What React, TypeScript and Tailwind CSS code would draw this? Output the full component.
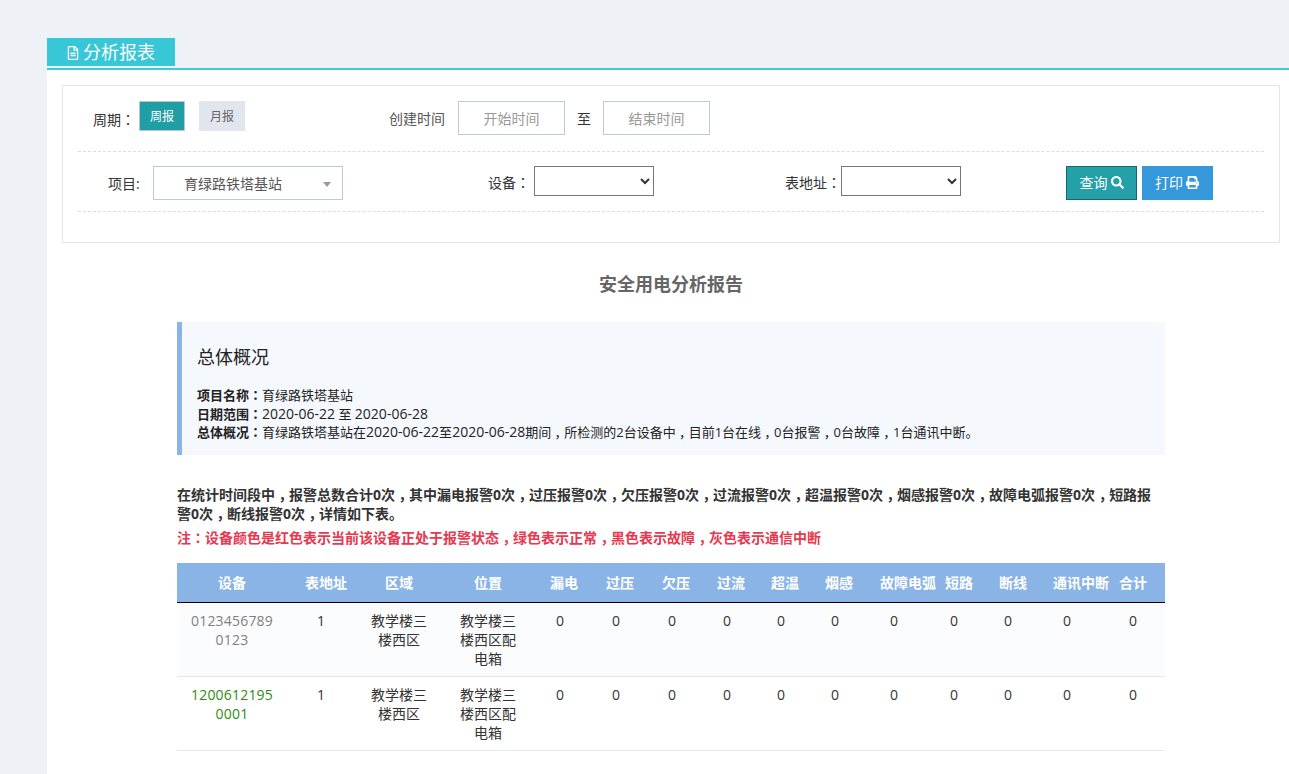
import { FaPrint, FaRegFileAlt, FaSearch } from "react-icons/fa";

const FONT = "font-['Open_Sans','Noto_Sans_CJK_SC',sans-serif]";

const COLUMNS = [
  { name: "设备", width: "w-[110px]", head: "text-center" },
  { name: "表地址", width: "w-[68px]", head: "text-center pl-[10px]" },
  { name: "区域", width: "w-[88px]", head: "text-center" },
  { name: "位置", width: "w-[90px]", head: "text-center" },
  { name: "漏电", width: "w-[54px]", head: "text-center pl-[8px]" },
  { name: "过压", width: "w-[58px]", head: "text-center pl-[8px]" },
  { name: "欠压", width: "w-[54px]", head: "text-center pl-[8px]" },
  { name: "过流", width: "w-[56px]", head: "text-center pl-[8px]" },
  { name: "超温", width: "w-[52px]", head: "text-center pl-[8px]" },
  { name: "烟感", width: "w-[56px]", head: "text-center pl-[8px]" },
  { name: "故障电弧", width: "w-[62px]", head: "text-left pl-[17px]" },
  { name: "短路", width: "w-[58px]", head: "text-center pl-[10px]" },
  { name: "断线", width: "w-[50px]", head: "text-center pl-[10px]" },
  { name: "通讯中断", width: "w-[68px]", head: "text-left pl-[20px]" },
  { name: "合计", width: "w-[64px]", head: "text-center" },
];

const ROWS = [
  { id: "0123456789 0123", color: "text-[#808080]", bg: "bg-[#fbfcfe]" },
  { id: "1200612195 0001", color: "text-[#2e8b12]", bg: "bg-white" },
];

// punctuation sits in the middle of its cell in the screenshot, SC font puts it left
function Punct({ text }: { text: string }) {
  return (
    <>
      {text.split(/([，：])/).map((part, i) =>
        part === "：" ? (
          <span key={i} className="font-['Noto_Sans_CJK_TC']">：</span>
        ) : part === "，" ? (
          <span key={i} className="inline-block w-[1em] text-center [font-feature-settings:'halt']">，</span>
        ) : (
          part
        )
      )}
    </>
  );
}

function Latin({ children }: { children: string }) {
  return <span className="text-[14px]">{children}</span>;
}

export default function App() {
  return (
    <div className={`${FONT} min-h-screen bg-[#eef1f6] pl-[47px] pt-[38px] text-[14px] text-[#333]`}>
      <div className="flex h-[28px] w-[128px] items-center gap-[3px] bg-[#38c7d6] pl-[19px] pt-[1px] text-[18px] text-white">
        <FaRegFileAlt className="text-[14px]" />
        <span>分析报表</span>
      </div>
      <div className="mt-[2px] h-[2px] bg-[#3ccbda]" />

      <div className="min-h-[704px] bg-white pl-[15px] pt-[15px]">
        {/* 筛选 */}
        <div className="h-[158px] w-[1218px] border border-[#e5e5e5] px-[15px]">
          <div className="flex h-[66px] items-start border-b border-dashed border-[#dddddd] pt-[15px]">
            <span className="ml-[15px] mt-[8px] w-[46px] text-[#333]"><Punct text="周期：" /></span>
            <button className="h-[30px] w-[46px] border border-[#b8c5d6] bg-[#1f9ea3] pt-[1px] text-[12px] text-white">周报</button>
            <button className="ml-[14px] h-[30px] w-[46px] bg-[#e1e5ee] pt-[1px] text-[12px] text-[#666]">月报</button>
            <span className="ml-[144px] mt-[7px] w-[69px] text-[#555]">创建时间</span>
            <input
              placeholder="开始时间"
              className="h-[34px] w-[107px] border border-[#c2cad8] text-center text-[14px] placeholder:text-[#999]"
            />
            <span className="ml-[12px] mt-[7px] w-[26px]">至</span>
            <input
              placeholder="结束时间"
              className="h-[34px] w-[107px] border border-[#c2cad8] text-center text-[14px] placeholder:text-[#999]"
            />
          </div>

          <div className="flex h-[60px] items-start border-b border-dashed border-[#dddddd] pt-[14px]">
            <span className="ml-[30px] mt-[7px] w-[45px]">项目:</span>
            <div className="flex h-[34px] w-[190px] items-center border border-[#c2cad8] pl-[30px] pr-[11px] text-[#555]">
              <span className="flex-1">育绿路铁塔基站</span>
              <span className="mt-[2px] h-0 w-0 border-x-[4px] border-t-[5px] border-x-transparent border-t-[#999]" />
            </div>
            <span className="ml-[145px] mt-[6px] w-[46px]"><Punct text="设备：" /></span>
            <select className="h-[30px] w-[120px] border border-[#767676] bg-white" />
            <span className="ml-[131px] mt-[6px] w-[56px]"><Punct text="表地址：" /></span>
            <select className="h-[30px] w-[120px] border border-[#767676] bg-white" />
            <button className="ml-[105px] flex h-[34px] w-[71px] items-center justify-center gap-[3px] border border-[#17676e] bg-[#26a0a8] pb-[1px] text-white">
              查询 <FaSearch className="text-[13px]" />
            </button>
            <button className="ml-[5px] flex h-[34px] w-[71px] items-center justify-center gap-[3px] bg-[#3498db] pb-[1px] pr-[1px] text-white">
              打印 <FaPrint className="text-[13px]" />
            </button>
          </div>
        </div>

        <h1 className="mt-[28px] w-[1218px] text-center text-[18px] font-bold leading-[26px] text-[#666]">
          安全用电分析报告
        </h1>

        {/* 概况 */}
        <div className="ml-[115px] mt-[25px] w-[988px]">
          <div className="h-[133px] border-l-[5px] border-[#8ab3e6] bg-[#f5f8fd] pl-[15px] pt-[22px] text-[13px] leading-[17.6px] text-[#222]">
            <h2 className="mb-[16px] text-[18px] leading-[26px] text-[#222]">总体概况</h2>
            <p><b><Punct text="项目名称：" /></b>育绿路铁塔基站</p>
            <p>
              <b><Punct text="日期范围：" /></b>
              <Latin>2020-06-22</Latin> 至 <Latin>2020-06-28</Latin>
            </p>
            <p>
              <b><Punct text="总体概况：" /></b>育绿路铁塔基站在<Latin>2020-06-22</Latin>至<Latin>2020-06-28</Latin>期间
              <Punct text="，所检测的2台设备中，目前1台在线，0台报警，0台故障，1台通讯中断。" />
            </p>
          </div>

          <p className="mt-[30px] font-bold leading-[19px] text-[#333]">
            <Punct text="在统计时间段中，报警总数合计0次，其中漏电报警0次，过压报警0次，欠压报警0次，过流报警0次，超温报警0次，烟感报警0次，故障电弧报警0次，短路报" />
            <Punct text="警0次，断线报警0次，详情如下表。" />
          </p>
          <p className="mt-[5px] font-bold leading-[19px] text-[#e8384f]">
            <Punct text="注：设备颜色是红色表示当前该设备正处于报警状态，绿色表示正常，黑色表示故障，灰色表示通信中断" />
          </p>

          <table className="mt-[16px] w-[988px] table-fixed border-collapse">
            <colgroup>
              {COLUMNS.map((c) => (
                <col key={c.name} className={c.width} />
              ))}
            </colgroup>
            <thead>
              <tr className="h-[39px] border-b border-black bg-[#8ab3e6] text-white">
                {COLUMNS.map((c) => (
                  <th key={c.name} className={`whitespace-nowrap font-bold ${c.head}`}>
                    {c.name}
                  </th>
                ))}
              </tr>
            </thead>
            <tbody>
              {ROWS.map((r) => (
                <tr key={r.id} className={`h-[74px] border-b border-[#e8e8e8] align-top leading-[19px] ${r.bg}`}>
                  <td className={`px-[10px] pt-[8px] text-center tracking-[0.2px] ${r.color}`}>{r.id}</td>
                  <td className="pt-[8px] text-center">1</td>
                  <td className="px-[15px] pt-[8px] text-center">教学楼三楼西区</td>
                  <td className="px-[16px] pt-[8px] text-center">教学楼三楼西区配电箱</td>
                  {COLUMNS.slice(4).map((c) => (
                    <td key={c.name} className="pt-[8px] text-center">0</td>
                  ))}
                </tr>
              ))}
            </tbody>
          </table>
        </div>
      </div>
    </div>
  );
}
